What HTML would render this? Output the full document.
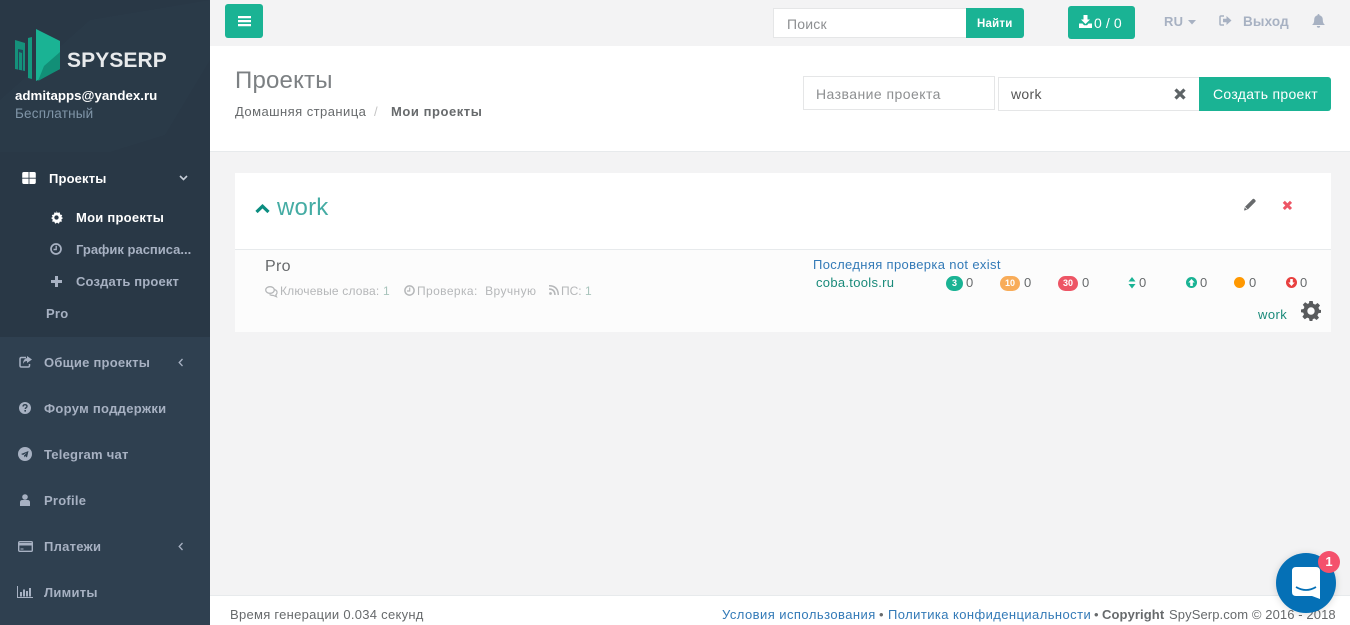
<!DOCTYPE html>
<html lang="ru">
<head>
<meta charset="utf-8">
<title>SpySerp</title>
<style>
html,body{margin:0;padding:0;width:1350px;height:625px;overflow:hidden;background:#f3f3f4;font-family:"Liberation Sans",Arial,sans-serif;font-size:13px;color:#676a6c}
.t{position:absolute;white-space:nowrap;line-height:18px}
.b{position:absolute;box-sizing:border-box}
.s{font-weight:bold;color:#a7b1c2;letter-spacing:.25px;font-size:13px;margin-top:1px}
svg{position:absolute;overflow:visible}
.inp{background:#fff;border:1px solid #e5e6e7}
.g{background:#1ab394;border-radius:3px;color:#fff}
.ph{color:#8d8f91;font-size:14px;letter-spacing:.45px}
.m{font-size:12px;color:#b5b7b9;letter-spacing:.18px}
.n{font-size:13px;color:#676a6c}
.pill{position:absolute;height:15px;border-radius:7.5px;color:#fff;font-size:9px;font-weight:bold;text-align:center;line-height:15px}
</style>
</head>
<body>
<!-- sidebar -->
<div class="b" style="left:0;top:0;width:210px;height:625px;background:#2f4050"></div>
<div class="b" style="left:0;top:0;width:210px;height:152px;background:#293846"></div>
<svg style="left:0;top:0" width="210" height="152"><polygon points="90,20 210,0 210,60 165,135 110,152 0,152 0,100" fill="#2f4050" opacity=".3"/></svg>
<div class="b" style="left:0;top:152px;width:210px;height:185px;background:#293846"></div>
<!-- logo -->
<svg style="left:0;top:0" width="70" height="90">
<polygon points="15,40 25,43 25,71 15,69" fill="#15917b"/>
<polygon points="18,49 23,50 23,71 22,71 22,53 19,52 19,70 18,70" fill="#22495a"/>
<polygon points="28,38 32,37 32,79 28,78" fill="#149a80"/>
<polygon points="36,29 60,41 60,69 36,81" fill="#1ab394"/>
<polygon points="60,52 60,69 38,81 44,66" fill="#128f77"/>
</svg>
<div class="t" style="left:67px;top:49px;font-size:21px;line-height:24px;font-weight:bold;color:#e8eaec;letter-spacing:.1px">SPYSERP</div>
<div class="t" style="left:15px;top:87px;color:#fff;font-weight:bold;font-size:13.3px">admitapps@yandex.ru</div>
<div class="t" style="left:15px;top:105px;color:#8095a8;font-size:13.5px;letter-spacing:.2px">Бесплатный</div>

<svg style="left:22px;top:172px" width="14" height="12" viewBox="0 0 13 11.500"><path d="M0 1.500Q0 0 1.500 0H6.100V5.500H0ZM6.900 0H11.500Q13 0 13 1.500V5.500H6.900ZM0 6.300H6.100V11.500H1.500Q0 11.500 0 10ZM6.900 6.300H13V10Q13 11.500 11.500 11.500H6.900Z" fill="#fff"/></svg>
<div class="t s" style="left:49px;top:169px;color:#fff;letter-spacing:.15px">Проекты</div>
<svg style="left:179px;top:175px" width="9" height="6"><path d="M1 1L4.500 4.500L8 1" fill="none" stroke="#c7ced8" stroke-width="1.600"/></svg>

<svg style="left:50px;top:211px" width="13" height="13" viewBox="0 0 24 24"><path d="M12 0l2 3.500 4-1 .6 4 4 .8-1.500 3.700 2.900 2-3 2.600 1 4-4 .2-1.600 3.700-3.400-2.100-3.400 2.100-1.600-3.700-4-.2 1-4-3-2.600 2.900-2-1.500-3.700 4-.8.600-4 4 1z" fill="#fff"/><circle cx="12" cy="12" r="4" fill="#293846"/></svg>
<div class="t s" style="left:76px;top:208px;color:#fff">Мои проекты</div>
<svg style="left:50px;top:243px" width="12" height="12" viewBox="0 0 12 12"><circle cx="6" cy="6" r="5" fill="none" stroke="#a7b1c2" stroke-width="1.700"/><path d="M6.200 2.800V6.500H3.500" fill="none" stroke="#a7b1c2" stroke-width="1.400"/></svg>
<div class="t s" style="left:76px;top:240px;letter-spacing:0">График расписа...</div>
<svg style="left:51px;top:276px" width="11" height="11"><path d="M4 0H7V4H11V7H7V11H4V7H0V4H4Z" fill="#a7b1c2"/></svg>
<div class="t s" style="left:76px;top:272px;letter-spacing:.15px">Создать проект</div>
<div class="t s" style="left:46px;top:304px">Pro</div>

<svg style="left:19px;top:356px" width="13" height="12" viewBox="0 0 13 12"><path d="M7 1.500H2.500Q1 1.500 1 3V9.500Q1 11 2.500 11H9Q10.500 11 10.500 9.500V8" fill="none" stroke="#a7b1c2" stroke-width="1.500"/><path d="M8 0L13 3.500L8 7V5Q5 5 4 8Q4 3 8 2Z" fill="#a7b1c2"/></svg>
<div class="t s" style="left:44px;top:353px">Общие проекты</div>
<svg style="left:178px;top:358px" width="6" height="9"><path d="M4.500 1L1.200 4.500L4.500 8" fill="none" stroke="#a7b1c2" stroke-width="1.300"/></svg>

<svg style="left:19px;top:402px" width="12" height="12" viewBox="0 0 12 12"><circle cx="6" cy="6" r="6" fill="#a7b1c2"/><path d="M4 4.500Q4.200 2.700 6 2.700Q8 2.700 8 4.300Q8 5.300 6.800 6Q6.300 6.300 6.300 7" fill="none" stroke="#2f4050" stroke-width="1.400"/><rect x="5.400" y="8" width="1.600" height="1.600" fill="#2f4050"/></svg>
<div class="t s" style="left:44px;top:399px;letter-spacing:.3px">Форум поддержки</div>

<svg style="left:18px;top:447px" width="14" height="14" viewBox="0 0 14 14"><circle cx="7" cy="7" r="7" fill="#a7b1c2"/><path d="M3 7L10.500 4L9 10.500L7 9L6 10.500V8.500L9 5.500L5 8Z" fill="#2f4050"/></svg>
<div class="t s" style="left:44px;top:445px">Telegram чат</div>

<svg style="left:20px;top:494px" width="10" height="12" viewBox="0 0 10 12"><circle cx="5" cy="3" r="2.800" fill="#a7b1c2"/><path d="M0 12V8.500Q0 6 2.500 6H7.500Q10 6 10 8.500V12Z" fill="#a7b1c2"/></svg>
<div class="t s" style="left:44px;top:491px">Profile</div>

<svg style="left:18px;top:541px" width="15" height="11" viewBox="0 0 15 11"><rect x=".7" y=".7" width="13.600" height="9.600" rx="1" fill="none" stroke="#a7b1c2" stroke-width="1.400"/><rect x="1" y="2" width="13" height="2.500" fill="#a7b1c2"/><rect x="2.500" y="7.500" width="3" height="1" fill="#a7b1c2"/></svg>
<div class="t s" style="left:44px;top:537px">Платежи</div>
<svg style="left:178px;top:542px" width="6" height="9"><path d="M4.500 1L1.200 4.500L4.500 8" fill="none" stroke="#a7b1c2" stroke-width="1.300"/></svg>

<svg style="left:17px;top:586px" width="16" height="12" viewBox="0 0 16 12"><path d="M.5 0V11.500H16" fill="none" stroke="#a7b1c2"/><path d="M3 6h2v4.500H3zM6 3.500h2v7H6zM9 5h2v5.500H9zM12 2h2v8.500h-2z" fill="#a7b1c2"/></svg>
<div class="t s" style="left:44px;top:583px">Лимиты</div>

<!-- top bar -->
<div class="b" style="left:210px;top:46px;width:1140px;height:106px;background:#fff;border-bottom:1px solid #e7eaec"></div>
<div class="b g" style="left:225px;top:4px;width:38px;height:34px"></div>
<svg style="left:238px;top:16px" width="13" height="11"><path d="M0 0H13V2.200H0ZM0 4H13V6.200H0ZM0 8H13V10.200H0Z" fill="#fff"/></svg>
<div class="b inp" style="left:773px;top:8px;width:194px;height:30px"></div>
<div class="t ph" style="left:787px;top:15px;letter-spacing:.2px">Поиск</div>
<div class="b g" style="left:966px;top:8px;width:58px;height:30px;border-radius:0 3px 3px 0"></div>
<div class="t" style="left:977px;top:15px;color:#fff;font-weight:bold;font-size:11.500px;letter-spacing:.2px">Найти</div>
<div class="b g" style="left:1068px;top:6px;width:67px;height:33px"></div>
<svg style="left:1079px;top:15px" width="13" height="13" viewBox="0 0 13 13"><path d="M4.500 0H8.500V4.500H11L6.500 9L2 4.500H4.500Z" fill="#fff"/><path d="M0 8.500H3.500L5 10.200H8L9.500 8.500H13V13H0Z" fill="#fff"/></svg>
<div class="t" style="left:1094px;top:14px;color:#fff;font-size:14px;letter-spacing:.6px;word-spacing:-1px">0 / 0</div>
<div class="t" style="left:1164px;top:13px;color:#a7b1c2;font-weight:bold;font-size:13px;letter-spacing:.2px">RU</div>
<svg style="left:1188px;top:20px" width="8" height="5"><path d="M0 0H8L4 4.500Z" fill="#a7b1c2"/></svg>
<svg style="left:1219px;top:15px" width="13" height="12" viewBox="0 0 13 12"><path d="M5 1H2Q1 1 1 2V9Q1 10 2 10H5" fill="none" stroke="#a7b1c2" stroke-width="1.500"/><path d="M4 3.800H7.500V1L12.500 5.500L7.500 10V7.200H4Z" fill="#a7b1c2"/></svg>
<div class="t" style="left:1243px;top:13px;color:#a7b1c2;font-weight:bold;font-size:13.500px;letter-spacing:.15px">Выход</div>
<svg style="left:1312px;top:14px" width="13" height="14" viewBox="0 0 13 14"><path d="M6.500 0Q7.500 0 7.500 1.200Q10.800 2 10.800 6Q10.800 9.500 13 11H0Q2.200 9.500 2.200 6Q2.200 2 5.500 1.200Q5.500 0 6.500 0Z" fill="#a7b1c2"/><path d="M4.800 12H8.200Q8 13.800 6.500 13.800Q5 13.800 4.800 12Z" fill="#a7b1c2"/></svg>

<!-- heading -->
<div class="t" style="left:235px;top:67px;font-size:24px;line-height:28px;color:#7c8083;font-weight:normal;letter-spacing:.2px">Проекты</div>
<div class="t" style="left:235px;top:103px;font-size:13px;letter-spacing:.45px">Домашняя страница</div>
<div class="t" style="left:374px;top:103px;color:#c5c5c5">/</div>
<div class="t" style="left:391px;top:103px;font-weight:bold;letter-spacing:.55px">Мои проекты</div>

<div class="b inp" style="left:803px;top:76px;width:192px;height:34px"></div>
<div class="t ph" style="left:816px;top:85px">Название проекта</div>
<div class="b inp" style="left:998px;top:77px;width:202px;height:34px"></div>
<div class="t" style="left:1011px;top:85px;font-size:14px;color:#555;letter-spacing:.3px">work</div>
<svg style="left:1174px;top:88px" width="12" height="12"><path d="M1.500 1.500L10.500 10.500M10.500 1.500L1.500 10.500" stroke="#5d6366" stroke-width="3.200" fill="none"/></svg>
<div class="b g" style="left:1199px;top:77px;width:132px;height:34px;border-radius:0 3px 3px 0"></div>
<div class="t" style="left:1213px;top:85px;color:#fff;font-size:14px;letter-spacing:.3px">Создать проект</div>

<!-- panel -->
<div class="b" style="left:235px;top:173px;width:1096px;height:159px;background:#fff"></div>
<div class="b" style="left:235px;top:249px;width:1096px;height:83px;background:#fcfcfc;border-top:1px solid #e7eaec"></div>
<svg style="left:255px;top:203px" width="15" height="11"><path d="M1.500 9L7.500 3.200L13.500 9" fill="none" stroke="#0b8d80" stroke-width="3.200"/></svg>
<div class="t" style="left:277px;top:192px;font-size:24px;line-height:32px;color:#45aca4;letter-spacing:.2px">work</div>
<svg style="left:1244px;top:198px" width="12" height="13" viewBox="0 0 12 13"><path d="M0 12.500L.8 9L8.500 1.300Q9.500 .3 10.500 1.300L11.200 2Q12.200 3 11.200 4L3.500 11.700Z" fill="#676a6c"/><path d="M.8 9L3.500 11.700" stroke="#fff" stroke-width=".7"/></svg>
<svg style="left:1282px;top:200px" width="11" height="11"><path d="M1.800 1.800L9 9M9 1.800L1.800 9" stroke="#ed5565" stroke-width="3" fill="none"/></svg>

<div class="t" style="left:265px;top:259px;font-size:16px;color:#676a6c;letter-spacing:.3px;line-height:16px">Pro</div>
<svg style="left:265px;top:286px" width="13" height="11" viewBox="0 0 13 11"><ellipse cx="5" cy="4" rx="4.300" ry="3.300" fill="none" stroke="#b5b7b9" stroke-width="1.300"/><path d="M9.500 3.500Q12.500 4.500 12 7Q11.500 8.500 10.800 9L11.500 10.800L8.500 9.500Q6 9.500 4.500 8.500" fill="none" stroke="#b5b7b9" stroke-width="1.200"/></svg>
<div class="t m" style="left:280px;top:282px">Ключевые слова: <span style="color:#a8c4bc">1</span></div>
<svg style="left:404px;top:285px" width="11" height="11" viewBox="0 0 11 11"><circle cx="5.500" cy="5.500" r="4.600" fill="none" stroke="#b5b7b9" stroke-width="1.500"/><path d="M5.700 2.500V6H3" fill="none" stroke="#b5b7b9" stroke-width="1.200"/></svg>
<div class="t m" style="left:417px;top:282px;letter-spacing:.4px">Проверка:&nbsp; Вручную</div>
<svg style="left:549px;top:285px" width="10" height="10" viewBox="0 0 10 10"><circle cx="1.500" cy="8.500" r="1.400" fill="#b5b7b9"/><path d="M0 4Q5.800 4 6 10M0 .8Q9 .8 9.300 10" fill="none" stroke="#b5b7b9" stroke-width="1.500"/></svg>
<div class="t m" style="left:561px;top:282px;letter-spacing:0">ПС: <span style="color:#a8c4bc">1</span></div>

<div class="t" style="left:813px;top:256px;color:#337ab7;font-size:13px;letter-spacing:.35px">Последняя проверка not exist</div>
<div class="t" style="left:816px;top:274px;color:#1a8a7a;font-size:13px;letter-spacing:.3px">coba.tools.ru</div>

<div class="pill" style="left:946px;top:276px;width:17px;background:#1ab394">3</div>
<div class="t n" style="left:966px;top:274px">0</div>
<div class="pill" style="left:1000px;top:276px;width:20px;background:#f8ac59">10</div>
<div class="t n" style="left:1024px;top:274px">0</div>
<div class="pill" style="left:1058px;top:276px;width:20px;background:#ed5565">30</div>
<div class="t n" style="left:1082px;top:274px">0</div>
<svg style="left:1128px;top:277px" width="8" height="12"><path d="M4 0L7.500 4.500H.5ZM4 11.500L.5 7H7.500Z" fill="#1ab394"/></svg>
<div class="t n" style="left:1139px;top:274px">0</div>
<svg style="left:1186px;top:277px" width="11" height="11" viewBox="0 0 11 11"><circle cx="5.500" cy="5.500" r="5.500" fill="#1ab394"/><path d="M5.500 2L8.700 5.500H6.800V9H4.200V5.500H2.300Z" fill="#fff"/></svg>
<div class="t n" style="left:1200px;top:274px">0</div>
<svg style="left:1234px;top:277px" width="11" height="11"><circle cx="5.500" cy="5.500" r="5.500" fill="#ff9800"/></svg>
<div class="t n" style="left:1249px;top:274px">0</div>
<svg style="left:1286px;top:277px" width="11" height="11" viewBox="0 0 11 11"><circle cx="5.500" cy="5.500" r="5.500" fill="#e8403f"/><path d="M5.500 9L2.300 5.500H4.200V2H6.800V5.500H8.700Z" fill="#fff"/></svg>
<div class="t n" style="left:1300px;top:274px">0</div>

<div class="t" style="left:1258px;top:306px;color:#1a8a7a;font-size:13px;letter-spacing:.45px">work</div>
<svg style="left:1301px;top:301px" width="20" height="20" viewBox="0 0 20 20"><path d="M8.300 0H11.700L12.200 2.700L14.300 3.600L16.600 2L19 4.400L17.400 6.700L18.300 8.800L20 9V11.700L17.400 12.300L16.400 14.400L18 16.700L15.600 19L13.300 17.400L11.700 18.200L11.400 20H8.600L8 17.400L6.200 16.600L3.800 18.200L1.400 15.800L3 13.400L2.200 11.600L0 11.200V8.500L2.600 8L3.400 6L1.800 3.700L4.200 1.300L6.500 2.900L8 2.300Z" fill="#595b5d"/><circle cx="10" cy="10" r="3.700" fill="#fcfcfc"/></svg>

<!-- footer -->
<div class="b" style="left:210px;top:595px;width:1140px;height:30px;background:#fff;border-top:1px solid #e7eaec"></div>
<div class="t" style="left:230px;top:606px;font-size:13px;letter-spacing:.28px">Время генерации 0.034 секунд</div>
<div class="t" style="left:722px;top:606px;color:#337ab7;letter-spacing:.45px">Условия использования</div>
<div class="t" style="left:879px;top:606px">•</div>
<div class="t" style="left:888px;top:606px;color:#337ab7;letter-spacing:.42px">Политика конфиденциальности</div>
<div class="t" style="left:1094px;top:606px">•</div>
<div class="t" style="left:1102px;top:606px;font-weight:bold;letter-spacing:.1px">Copyright</div>
<div class="t" style="left:1169px;top:606px;letter-spacing:.1px">SpySerp.com © 2016 - 2018</div>

<!-- chat -->
<div class="b" style="left:1276px;top:553px;width:60px;height:60px;border-radius:50%;background:#0570b6;box-shadow:0 1px 8px rgba(0,0,0,.15)"></div>
<svg style="left:1292px;top:567px" width="28" height="33" viewBox="0 0 28 33"><path d="M4 0H24Q28 0 28 4V32L20 29H4Q0 29 0 25V4Q0 0 4 0Z" fill="#fff"/><path d="M4 20Q14 26 24 20" fill="none" stroke="#0570b6" stroke-width="1.800"/></svg>
<div class="b" style="left:1318px;top:551px;width:22px;height:22px;border-radius:50%;background:#f4516c;color:#fff;font-size:13px;font-weight:bold;text-align:center;line-height:22px">1</div>
</body>
</html>
